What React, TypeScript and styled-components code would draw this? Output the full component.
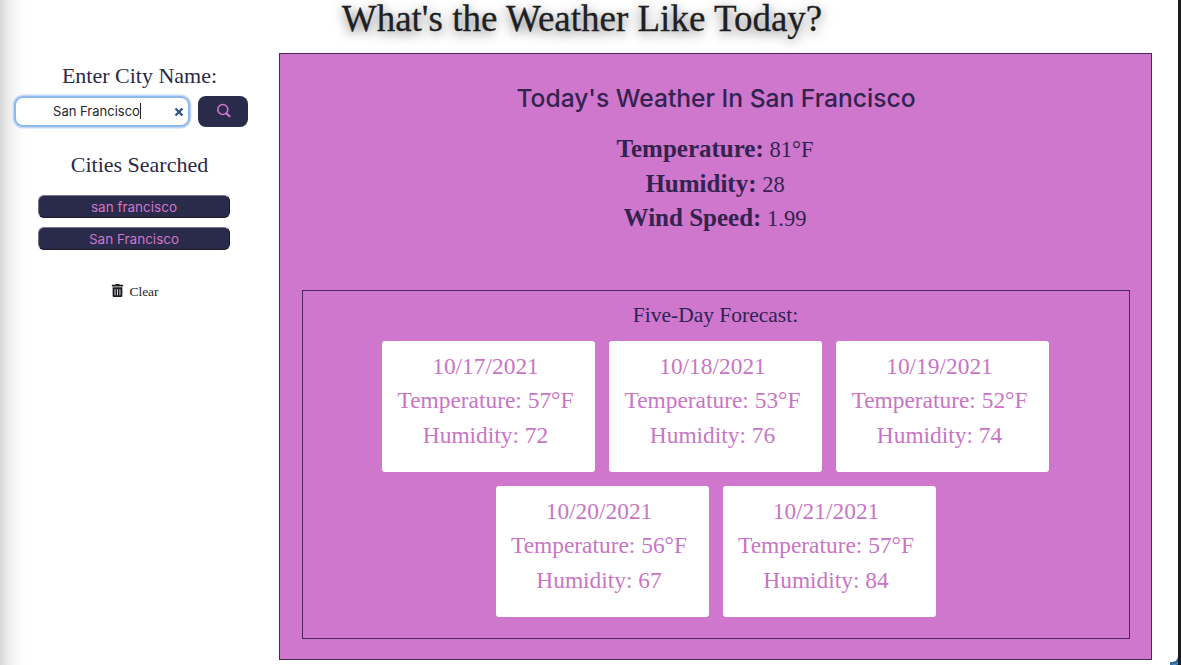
import React from 'react';
import styled, { createGlobalStyle } from 'styled-components';
import { FaTrashAlt } from 'react-icons/fa';

const GlobalStyle = createGlobalStyle`
  html, body {
    margin: 0;
    padding: 0;
    background: #fff;
    overflow: hidden;
  }
  * {
    box-sizing: border-box;
  }
`;

const serif = `'Liberation Serif', 'Times New Roman', serif`;
const sans = `Inter, 'Liberation Sans', sans-serif`;

const PageContainer = styled.div`
  position: relative;
  width: 1181px;
  height: 665px;
  overflow: hidden;
  border-right: 3px solid #1c1c20;
  background: linear-gradient(to right, #d6d6d6 0, #ececec 8px, #f8f8f8 16px, #fff 26px);
  font-family: ${serif};
`;

const CornerGlow = styled.div`
  position: absolute;
  right: -3px;
  bottom: 0;
  width: 11px;
  height: 18px;
  border-right: 3px solid #2f6ca8;
  border-bottom: 3px solid #2f6ca8;
  border-bottom-right-radius: 9px;
  box-shadow: 3px 3px 0 #2f6ca8;
`;

const Title = styled.h1`
  margin: 0;
  height: 53px;
  padding: 0 14px 0 0;
  text-align: center;
  font-family: ${serif};
  font-size: 37px;
  font-weight: 400;
  line-height: 37px;
  color: #1e1f22;
  -webkit-text-stroke: 0.3px #1e1f22;
  text-shadow: 0 3px 12px rgba(0, 0, 0, 0.6);
`;

const Layout = styled.div`
  display: flex;
  align-items: flex-start;
`;

const Sidebar = styled.aside`
  width: 279px;
  flex: none;
  display: flex;
  flex-direction: column;
  align-items: center;
  padding-top: 10px;
`;

const SideHeading = styled.h2`
  margin: 0;
  font-family: ${serif};
  font-size: 22px;
  font-weight: 400;
  line-height: 26px;
  color: #2a2a48;
`;

const SearchRow = styled.div`
  display: flex;
  align-items: center;
  gap: 8px;
  margin: 7px 0 25px -17px;
`;

const SearchField = styled.div`
  position: relative;
  width: 176px;
  height: 31px;
  display: flex;
  align-items: center;
  justify-content: center;
  padding: 0 10px 2px 0;
  background: #fff;
  border: 2px solid #8fb8ec;
  border-radius: 9px;
  box-shadow: 0 0 0 1.5px #c4daf6;
  font-family: ${sans};
  font-size: 13px;
  color: #26262c;
`;

const Caret = styled.span`
  display: inline-block;
  width: 1px;
  height: 16px;
  background: #222;
`;

const ClearMark = styled.svg`
  position: absolute;
  right: 4px;
  top: 9px;
  width: 10px;
  height: 10px;
`;

const SearchButton = styled.button`
  width: 50px;
  height: 31px;
  display: flex;
  align-items: center;
  justify-content: center;
  padding: 0 0 3px;
  border: none;
  border-radius: 8px;
  background: #2a2a4a;
`;

const CityList = styled.div`
  display: flex;
  flex-direction: column;
  gap: 9px;
  margin: 17px 0 34px -11px;
`;

const CityButton = styled.button`
  width: 192px;
  height: 23px;
  padding: 0;
  border: 1px solid #1a1a2c;
  border-top-color: #77778a;
  border-left-color: #77778a;
  border-radius: 6px;
  background: #2a2a4a;
  color: #cf76cd;
  font-family: ${sans};
  font-size: 13.5px;
  line-height: 20px;
`;

const ClearRow = styled.div`
  display: flex;
  align-items: center;
  gap: 5px;
  margin-left: -9px;
  font-family: ${serif};
  font-size: 13.5px;
  color: #26262c;

  svg {
    margin-top: -4px;
  }
`;

const WeatherPanel = styled.main`
  width: 873px;
  height: 607px;
  flex: none;
  padding: 27px 21px 22px 22px;
  background: #cf76cd;
  border: 1px solid #4a2a5c;
  color: #33234f;
  text-align: center;
`;

const PanelHeading = styled.h2`
  margin: 0 0 18px;
  font-family: ${sans};
  font-size: 24.6px;
  font-weight: 500;
  line-height: 34px;
  color: #33234f;
`;

const StatLine = styled.p`
  margin: 0;
  height: 34.5px;
  font-family: ${serif};
  font-size: 22.5px;
  line-height: 34.5px;
  padding-right: 2px;

  strong {
    font-size: 25px;
    font-weight: 700;
    line-height: 1;
  }
`;

const ForecastBox = styled.section`
  height: 349px;
  margin-top: 53px;
  padding: 11px 1px 0 0;
  border: 1px solid #4a2a5c;
`;

const ForecastHeading = styled.h3`
  margin: 0 0 12px;
  font-family: ${serif};
  font-size: 21.5px;
  font-weight: 400;
  line-height: 27px;
  color: #2d2450;
`;

const CardGrid = styled.div`
  display: flex;
  flex-wrap: wrap;
  justify-content: center;
  gap: 14px;
  width: 680px;
  margin: 0 auto;
`;

const DayCard = styled.article`
  width: 213px;
  height: 131px;
  padding: 8px 6px 0 0;
  background: #fff;
  border-radius: 3px;
  color: #c875c6;
  font-family: ${serif};
  font-size: 23.4px;
  line-height: 34.5px;
`;

const days = [
  { date: '10/17/2021', temp: 57, humidity: 72 },
  { date: '10/18/2021', temp: 53, humidity: 76 },
  { date: '10/19/2021', temp: 52, humidity: 74 },
  { date: '10/20/2021', temp: 56, humidity: 67 },
  { date: '10/21/2021', temp: 57, humidity: 84 },
];

const App = () => {
  return (
    <PageContainer>
      <GlobalStyle />
      <Title>What's the Weather Like Today?</Title>
      <Layout>
        <Sidebar>
          <SideHeading>Enter City Name:</SideHeading>
          <SearchRow>
            <SearchField>
              San Francisco<Caret />
              <ClearMark viewBox="0 0 10 10">
                <path d="M1.5 1.5l7 7M8.5 1.5l-7 7" stroke="#2f4f86" strokeWidth="2.2" fill="none" />
              </ClearMark>
            </SearchField>
            <SearchButton aria-label="Search">
              <svg width="15" height="15" viewBox="0 0 15 15">
                <circle cx="6.8" cy="6.5" r="5" stroke="#cf76cd" strokeWidth="1.6" fill="none" />
                <path d="M10.5 10.5l3 2.8" stroke="#cf76cd" strokeWidth="2.2" strokeLinecap="round" />
              </svg>
            </SearchButton>
          </SearchRow>
          <SideHeading>Cities Searched</SideHeading>
          <CityList>
            <CityButton>san francisco</CityButton>
            <CityButton>San Francisco</CityButton>
          </CityList>
          <ClearRow>
            <FaTrashAlt size={13} color="#1c1c20" />
            Clear
          </ClearRow>
        </Sidebar>
        <WeatherPanel>
          <PanelHeading>Today's Weather In San Francisco</PanelHeading>
          <StatLine><strong>Temperature:</strong> 81°F</StatLine>
          <StatLine><strong>Humidity:</strong> 28</StatLine>
          <StatLine><strong>Wind Speed:</strong> 1.99</StatLine>
          <ForecastBox>
            <ForecastHeading>Five-Day Forecast:</ForecastHeading>
            <CardGrid>
              {days.map((day) => (
                <DayCard key={day.date}>
                  {day.date}
                  <br />
                  Temperature: {day.temp}°F
                  <br />
                  Humidity: {day.humidity}
                </DayCard>
              ))}
            </CardGrid>
          </ForecastBox>
        </WeatherPanel>
      </Layout>
      <CornerGlow />
    </PageContainer>
  );
};

export default App;
